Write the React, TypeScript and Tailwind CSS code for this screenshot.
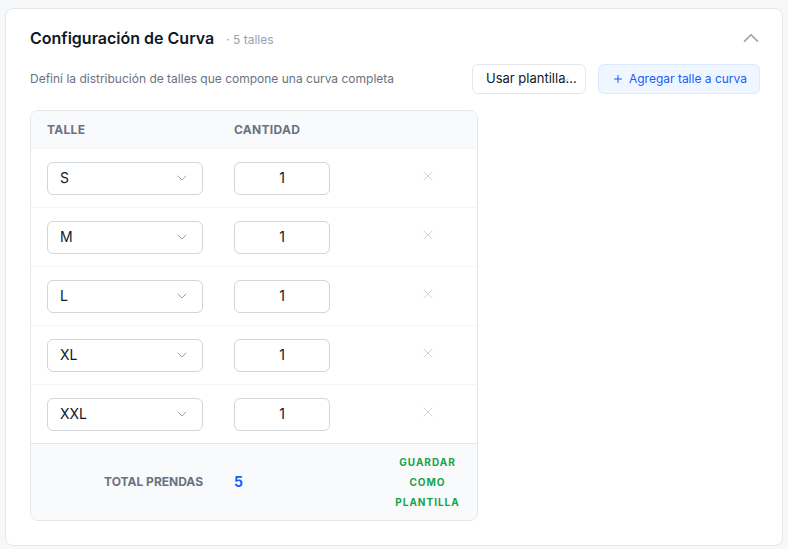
import { ChevronDown, ChevronUp, Plus, X } from "lucide-react";

const talles = ["S", "M", "L", "XL", "XXL"];

function TalleRow({ talle }: { talle: string }) {
  return (
    <div className="grid grid-cols-[187px_160px_1fr] items-center h-[59px] border-t border-gray-100">
      <div className="pl-4 pr-[15px]">
        <div className="flex items-center justify-between h-[33px] rounded-md border border-gray-300 bg-white pl-3 pr-3">
          <span className="text-sm text-gray-900">{talle}</span>
          <ChevronDown className="w-4 h-4 text-gray-400" strokeWidth={1.5} />
        </div>
      </div>
      <div className="pl-4">
        <div className="flex items-center justify-center w-24 h-[33px] rounded-md border border-gray-300 bg-white text-sm text-gray-900">
          1
        </div>
      </div>
      <div className="flex justify-center pb-1">
        <X className="w-4 h-4 text-gray-300" strokeWidth={1.5} />
      </div>
    </div>
  );
}

export default function App() {
  return (
    <div className="min-h-screen bg-[#f7f8fa] p-[5px] pt-2 font-['Inter',sans-serif]">
      <div className="rounded-lg border border-gray-200 bg-white pl-6 pr-[22px] pt-[17px] pb-6 w-[778px]">
        <div className="flex items-center justify-between h-6">
          <div className="flex items-baseline gap-3">
            <h2 className="text-base font-semibold text-gray-900">Configuración de Curva</h2>
            <span className="text-xs text-gray-400">· 5 talles</span>
          </div>
          <ChevronUp className="w-[26px] h-[26px] text-gray-400 -mr-1" strokeWidth={1.6} />
        </div>

        <div className="flex items-center justify-between mt-[14px]">
          <p className="text-xs text-gray-500">Definí la distribución de talles que compone una curva completa</p>
          <div className="flex items-center gap-3">
            <div className="relative flex items-center h-[30px] w-[114px] rounded-md border border-gray-200 bg-white pl-[13px]">
              <span className="text-[13px] text-gray-900">Usar plantilla...</span>
              <ChevronDown className="absolute right-[14px] top-[9px] w-3 h-3 text-gray-400" strokeWidth={1.5} />
            </div>
            <button className="flex items-center gap-[5px] h-[30px] rounded-md border border-blue-100 bg-blue-50 pl-[13px] pr-[12px] text-xs text-blue-600">
              <Plus className="w-3 h-3" strokeWidth={2} />
              Agregar talle a curva
            </button>
          </div>
        </div>

        <div className="mt-[16px] w-[448px] rounded-lg border border-gray-200 overflow-hidden">
          <div className="grid grid-cols-[187px_160px_1fr] items-center h-[37px] bg-gray-50 text-xs font-bold tracking-wide text-gray-500">
            <div className="pl-4">TALLE</div>
            <div className="pl-4">CANTIDAD</div>
            <div />
          </div>
          {talles.map((t) => (
            <TalleRow key={t} talle={t} />
          ))}
          <div className="grid grid-cols-[187px_160px_1fr] items-center h-[77px] border-t border-gray-200 bg-gray-50">
            <div className="pr-[15px] text-right text-xs font-bold text-gray-500">TOTAL PRENDAS</div>
            <div className="pl-4 text-sm font-bold text-blue-600">5</div>
            <div className="text-center text-[10px] font-bold leading-5 tracking-widest text-[#16a34a] px-3">
              GUARDAR COMO PLANTILLA
            </div>
          </div>
        </div>
      </div>
    </div>
  );
}
